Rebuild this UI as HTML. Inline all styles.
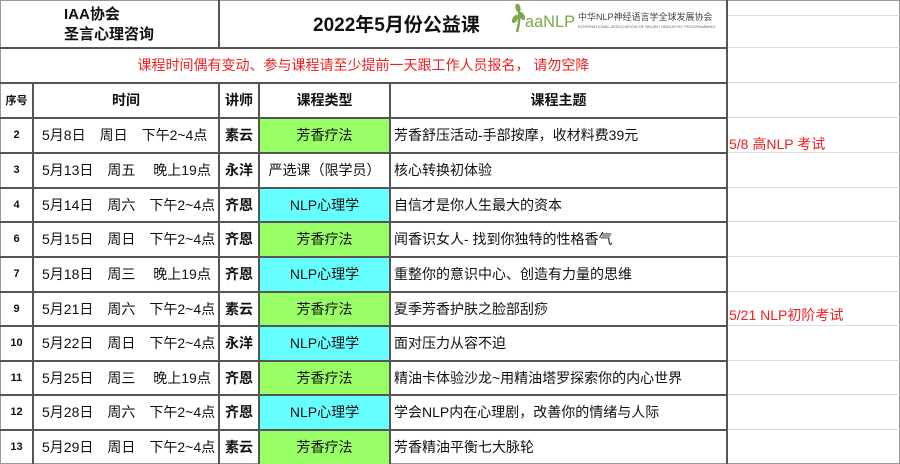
<!DOCTYPE html>
<html><head><meta charset="utf-8"><style>
body{margin:0;width:900px;height:464px;background:#fff;overflow:hidden;font-family:"Liberation Sans","Noto Sans CJK SC",sans-serif;position:relative}
.c{position:absolute;display:flex;align-items:center;box-sizing:border-box;font-size:14px;color:#111;white-space:nowrap}
.h{position:absolute;background:#555;height:1.5px}
.v{position:absolute;background:#555;width:1.5px}
.g{position:absolute;background:#ddd;height:1px;left:727px;width:173px}
</style></head><body>
<div style="position:absolute;left:0;top:0;width:898px;height:462px;border:1px solid #999"></div>
<div class="g" style="top:15px"></div>
<div class="g" style="top:47px"></div><div class="g" style="top:82px"></div><div class="g" style="top:117px"></div>
<div class="g" style="top:152px"></div><div class="g" style="top:187px"></div><div class="g" style="top:221px"></div><div class="g" style="top:256px"></div><div class="g" style="top:291px"></div><div class="g" style="top:325px"></div><div class="g" style="top:360px"></div><div class="g" style="top:394px"></div><div class="g" style="top:429px"></div>

<div style="position:absolute;left:259px;top:117px;width:130px;height:35px;background:#99ff66"></div>
<div style="position:absolute;left:259px;top:187px;width:130px;height:34px;background:#66ffff"></div>
<div style="position:absolute;left:259px;top:221px;width:130px;height:35px;background:#99ff66"></div>
<div style="position:absolute;left:259px;top:256px;width:130px;height:35px;background:#66ffff"></div>
<div style="position:absolute;left:259px;top:291px;width:130px;height:34px;background:#99ff66"></div>
<div style="position:absolute;left:259px;top:325px;width:130px;height:35px;background:#66ffff"></div>
<div style="position:absolute;left:259px;top:360px;width:130px;height:34px;background:#99ff66"></div>
<div style="position:absolute;left:259px;top:394px;width:130px;height:35px;background:#66ffff"></div>
<div style="position:absolute;left:259px;top:429px;width:130px;height:35px;background:#99ff66"></div>

<div class="h" style="left:0;width:727px;top:47px"></div>
<div class="h" style="left:0;width:727px;top:82px"></div>
<div class="h" style="left:0;width:727px;top:117px"></div>
<div class="h" style="left:0;width:727px;top:152px"></div>
<div class="h" style="left:0;width:727px;top:187px"></div>
<div class="h" style="left:0;width:727px;top:221px"></div>
<div class="h" style="left:0;width:727px;top:256px"></div>
<div class="h" style="left:0;width:727px;top:291px"></div>
<div class="h" style="left:0;width:727px;top:325px"></div>
<div class="h" style="left:0;width:727px;top:360px"></div>
<div class="h" style="left:0;width:727px;top:394px"></div>
<div class="h" style="left:0;width:727px;top:429px"></div>
<div class="v" style="left:218px;top:0;height:47px"></div>
<div class="v" style="left:726px;top:0;height:464px"></div>
<div class="v" style="left:32px;top:82px;height:382px"></div>
<div class="v" style="left:218px;top:82px;height:382px"></div>
<div class="v" style="left:258px;top:82px;height:382px"></div>
<div class="v" style="left:389px;top:82px;height:382px"></div>

<div class="c" style="left:0;top:2px;width:218px;height:45px;flex-direction:column;justify-content:center;font-weight:bold;font-size:15px;line-height:20px">IAA协会<br>圣言心理咨询</div>
<div class="c" style="left:313px;top:0;height:47px;font-weight:bold;font-size:19px">2022年5月份公益课</div>
<svg style="position:absolute;left:510px;top:2px" width="70" height="32" viewBox="0 0 70 32"><ellipse cx="8" cy="6" rx="2.5" ry="4.5" fill="#7aa84a" transform="rotate(-15 8 6)"/><ellipse cx="5" cy="17" rx="2.5" ry="4.5" fill="#7aa84a" transform="rotate(30 5 17)"/><ellipse cx="12" cy="14" rx="2.5" ry="4.5" fill="#7aa84a" transform="rotate(-30 12 14)"/><path d="M9 10 Q10 20 7 30" stroke="#7aa84a" stroke-width="2.5" fill="none"/><text x="15" y="25" font-family="Liberation Sans" font-size="17" fill="#7aa84a" textLength="50" lengthAdjust="spacingAndGlyphs">aaNLP</text></svg>
<div class="c" style="left:578px;top:10px;height:12px;font-size:9px;color:#444">中华NLP神经语言学全球发展协会</div>
<div class="c" style="left:578px;top:23px;height:6px;font-size:4px;color:#666">INTERNATIONAL ASSOCIATION OF NEURO LINGUISTIC PROGRAMMING</div>

<div class="c" style="left:0;top:48px;width:727px;height:34px;justify-content:center;color:#f02020;font-size:14px">课程时间偶有变动、参与课程请至少提前一天跟工作人员报名， 请勿空降</div>

<div class="c" style="left:0;top:83px;width:33px;height:34px;justify-content:center;font-weight:bold;font-size:11px">序号</div>
<div class="c" style="left:33px;top:83px;width:186px;height:34px;justify-content:center;font-weight:bold">时间</div>
<div class="c" style="left:219px;top:83px;width:40px;height:34px;justify-content:center;font-weight:bold">讲师</div>
<div class="c" style="left:259px;top:83px;width:131px;height:34px;justify-content:center;font-weight:bold">课程类型</div>
<div class="c" style="left:390px;top:83px;width:337px;height:34px;justify-content:center;font-weight:bold">课程主题</div>

<div id="rows"></div>
<script>
var d=[["2","5月8日　周日　下午2~4点","素云","芳香疗法","芳香舒压活动-手部按摩，收材料费39元",117],
["3","5月13日　周五　 晚上19点","永洋","严选课（限学员）","核心转换初体验",152],
["4","5月14日　周六　下午2~4点","齐恩","NLP心理学","自信才是你人生最大的资本",187],
["6","5月15日　周日　下午2~4点","齐恩","芳香疗法","闻香识女人- 找到你独特的性格香气",221],
["7","5月18日　周三　 晚上19点","齐恩","NLP心理学","重整你的意识中心、创造有力量的思维",256],
["9","5月21日　周六　下午2~4点","素云","芳香疗法","夏季芳香护肤之脸部刮痧",291],
["10","5月22日　周日　下午2~4点","永洋","NLP心理学","面对压力从容不迫",325],
["11","5月25日　周三　 晚上19点","齐恩","芳香疗法","精油卡体验沙龙~用精油塔罗探索你的内心世界",360],
["12","5月28日　周六　下午2~4点","齐恩","NLP心理学","学会NLP内在心理剧，改善你的情绪与人际",394],
["13","5月29日　周日　下午2~4点","素云","芳香疗法","芳香精油平衡七大脉轮",429]];
var h="";d.forEach(function(r){var y=r[5]+1;
h+='<div class="c" style="left:0;top:'+y+'px;width:33px;height:34px;justify-content:center;font-weight:bold;font-size:11px">'+r[0]+'</div>';
h+='<div class="c" style="left:42px;top:'+y+'px;height:34px">'+r[1]+'</div>';
h+='<div class="c" style="left:219px;top:'+y+'px;width:40px;height:34px;justify-content:center;font-weight:bold">'+r[2]+'</div>';
h+='<div class="c" style="left:259px;top:'+y+'px;width:131px;height:34px;justify-content:center">'+r[3]+'</div>';
h+='<div class="c" style="left:394px;top:'+y+'px;height:34px">'+r[4]+'</div>';});
document.getElementById("rows").innerHTML=h;
</script>
<div class="c" style="left:729px;top:134px;height:20px;color:#f02020;font-size:14px">5/8 高NLP 考试</div>
<div class="c" style="left:729px;top:305px;height:20px;color:#f02020;font-size:14px">5/21 NLP初阶考试</div>
</body></html>
